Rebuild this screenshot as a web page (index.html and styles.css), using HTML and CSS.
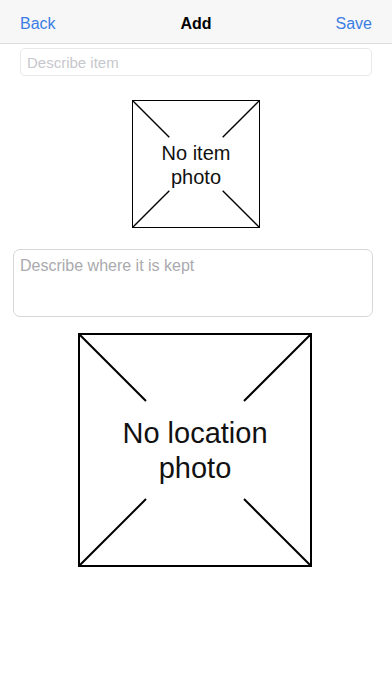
FILE: index.html
```html
<!DOCTYPE html>
<html lang="en">
<head>
<meta charset="utf-8">
<title>Add</title>
<link rel="stylesheet" href="styles.css">
</head>
<body>
<div class="screen">
  <header class="nav">
    <span class="nav-btn nav-left">Back</span>
    <span class="nav-title">Add</span>
    <span class="nav-btn nav-right">Save</span>
  </header>
  <main class="form">
    <input class="field-item" type="text" placeholder="Describe item">
    <div class="photo photo-item">
      <svg class="cross" viewBox="0 0 125 125" preserveAspectRatio="none">
        <line x1="0" y1="0" x2="36" y2="36"/>
        <line x1="125" y1="0" x2="89" y2="36"/>
        <line x1="0" y1="125" x2="36" y2="89"/>
        <line x1="125" y1="125" x2="89" y2="89"/>
      </svg>
      <div class="photo-label">No item<br>photo</div>
    </div>
    <textarea class="field-place" placeholder="Describe where it is kept"></textarea>
    <div class="photo photo-place">
      <svg class="cross" viewBox="0 0 230 230" preserveAspectRatio="none">
        <line x1="0" y1="0" x2="66" y2="66"/>
        <line x1="230" y1="0" x2="164" y2="66"/>
        <line x1="0" y1="230" x2="66" y2="164"/>
        <line x1="230" y1="230" x2="164" y2="164"/>
      </svg>
      <div class="photo-label">No location<br>photo</div>
    </div>
  </main>
</div>
</body>
</html>
```
FILE: styles.css
```css
* { box-sizing: border-box; }
html, body {
  margin: 0;
  padding: 0;
  background: #ffffff;
}
body {
  font-family: "Liberation Sans", Arial, sans-serif;
  color: #000;
  width: 392px;
  height: 696px;
  overflow: hidden;
}
.nav {
  height: 44px;
  padding-top: 4px;
  background: #f7f7f7;
  border-bottom: 1px solid #dcdcdc;
  display: grid;
  grid-template-columns: 1fr auto 1fr;
  align-items: start;
  line-height: 39px;
  padding-left: 20px;
  padding-right: 20px;
}
.nav-btn {
  color: #3a7ee4;
  font-size: 16px;
}
.nav-left { justify-self: start; }
.nav-right { justify-self: end; }
.nav-title {
  font-weight: bold;
  font-size: 16px;
}
.form {
  display: flex;
  flex-direction: column;
  align-items: center;
}
.field-item {
  display: block;
  align-self: stretch;
  margin: 4px 20px 0 20px;
  height: 28px;
  border: 1px solid #e9e9ec;
  border-radius: 5px;
  padding: 0 6px;
  font-family: "Liberation Sans", Arial, sans-serif;
  font-size: 15px;
  outline: none;
  background: #fff;
}
.field-item::placeholder { color: #c7c7cd; }
.photo {
  position: relative;
  border: 1.5px solid #000;
  display: flex;
  align-items: center;
  justify-content: center;
  text-align: center;
}
.photo-item {
  width: 128px;
  height: 128px;
  margin-top: 24px;
}
.photo-item .photo-label {
  font-size: 20px;
  line-height: 24px;
  margin-top: 2px;
}
.photo-place {
  width: 234px;
  height: 234px;
  margin-top: 16px;
  border-width: 2px;
  margin-left: -2px;
}
.photo-place .photo-label {
  font-size: 29px;
  line-height: 35px;
  margin-top: 1px;
}
.cross {
  position: absolute;
  left: 0;
  top: 0;
  width: 100%;
  height: 100%;
}
.cross line {
  stroke: #000;
  stroke-width: 1.4;
}
.photo-place .cross line { stroke-width: 2; }
.photo-label {
  position: relative;
  color: #111;
}
.field-place {
  display: block;
  align-self: stretch;
  margin: 21px 19px 0 13px;
  height: 68px;
  border: 1px solid #d6d6d9;
  border-radius: 7px;
  padding: 6px 6px;
  font-family: "Liberation Sans", Arial, sans-serif;
  font-size: 16px;
  line-height: 19px;
  resize: none;
  outline: none;
  background: #fff;
}
.field-place::placeholder { color: #aaaaae; }
```
